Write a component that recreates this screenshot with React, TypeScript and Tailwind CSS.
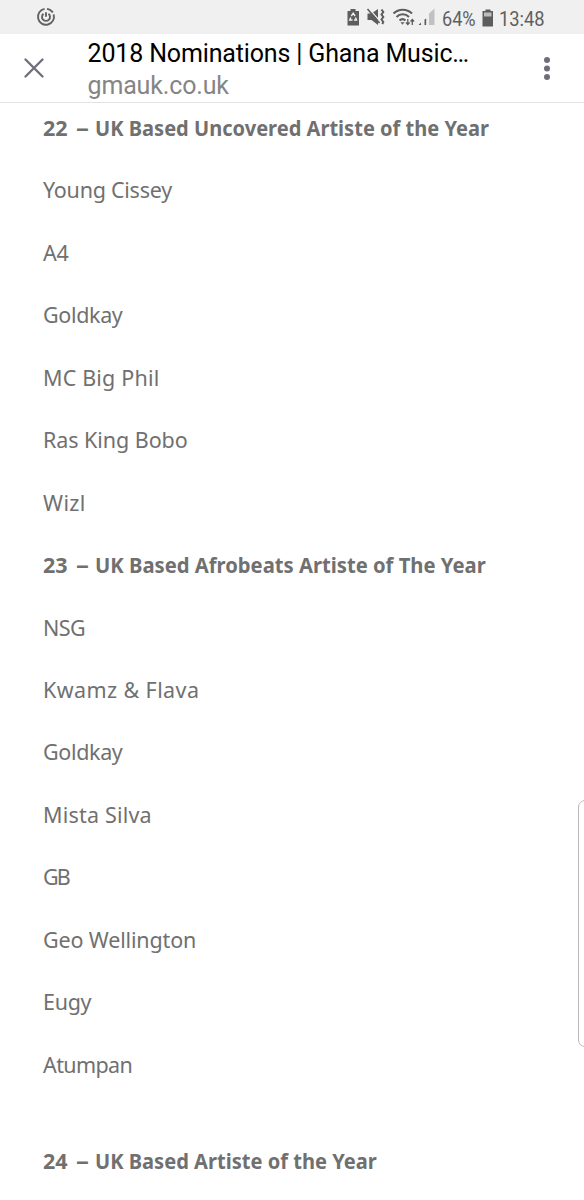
import React from 'react';

type Row =
  | { kind: 'category'; number: string; text: string; fit: string }
  | { kind: 'nominee'; text: string; spacing: string };

const rows: Row[] = [
  { kind: 'category', number: '22', text: 'UK Based Uncovered Artiste of the Year', fit: 'scale-x-[0.933]' },
  { kind: 'nominee', text: 'Young Cissey', spacing: 'tracking-[-0.25px]' },
  { kind: 'nominee', text: 'A4', spacing: 'tracking-[-0.2px]' },
  { kind: 'nominee', text: 'Goldkay', spacing: 'tracking-[-0.35px]' },
  { kind: 'nominee', text: 'MC Big Phil', spacing: 'tracking-[0.18px]' },
  { kind: 'nominee', text: 'Ras King Bobo', spacing: 'tracking-[-0.06px]' },
  { kind: 'nominee', text: 'Wizl', spacing: 'tracking-[0.4px]' },
  { kind: 'category', number: '23', text: 'UK Based Afrobeats Artiste of The Year', fit: 'scale-x-[0.94]' },
  { kind: 'nominee', text: 'NSG', spacing: 'tracking-[-0.6px]' },
  { kind: 'nominee', text: 'Kwamz & Flava', spacing: 'tracking-[0.4px]' },
  { kind: 'nominee', text: 'Goldkay', spacing: 'tracking-[-0.35px]' },
  { kind: 'nominee', text: 'Mista Silva', spacing: 'tracking-[0.2px]' },
  { kind: 'nominee', text: 'GB', spacing: 'tracking-[-2px]' },
  { kind: 'nominee', text: 'Geo Wellington', spacing: 'tracking-[-0.15px]' },
  { kind: 'nominee', text: 'Eugy', spacing: 'tracking-[-0.3px]' },
  { kind: 'nominee', text: 'Atumpan', spacing: 'tracking-[-0.6px]' },
];

function PowerRing() {
  return (
    <svg width="20" height="20" viewBox="0 0 20 20" fill="none" stroke="#626262" strokeWidth="1.900">
      <path d="M8.600 1.900A8 8 0 1 0 17.600 7.400" />
      <path d="M11 1.900A8 8 0 0 1 16.800 5.600" />
      <path d="M7.500 6.800a4 4 0 1 0 5 0" />
      <path d="M10 5.300v4.500" />
    </svg>
  );
}

function StatusIcons() {
  return (
    <svg width="90" height="22" viewBox="346 6 90 22" fill="none">
      <path d="M350.500 9h5v2h3.500v14.500h-11.500v-14.500h3z" fill="#5d5d5d" />
      <path d="M351.300 16l1.900-2.800 1.900 2.800M355.500 17.500l1 2.500h-2.500M352.500 20h-2.800l1.100-2.500" stroke="#f1f1f1" strokeWidth="1.400" />
      <path d="M367.500 13.500h4l6.500-4.500v16l-6.500-5h-4z" fill="#5d5d5d" />
      <path d="M368.500 8l13 15" stroke="#f0f0f0" strokeWidth="1.200" />
      <path d="M367.500 9l12 14" stroke="#5d5d5d" strokeWidth="1.600" />
      <path d="M381.500 9.500l1.800 2.500-1.800 2.500 1.800 2.500-1.800 2.500 1.800 2.500-1 2" stroke="#5d5d5d" strokeWidth="2" />
      <path d="M393.500 13.500a13 13 0 0 1 18.500 0M396.500 17a8.500 8.500 0 0 1 12.500 0M399.500 20.500a4.500 4.500 0 0 1 6 0" stroke="#5d5d5d" strokeWidth="2" />
      <path d="M400.500 22.300h4l-2 2.500z" fill="#5d5d5d" />
      <path d="M407.800 19v5M406 22.500l1.800 2 1.800-2M412.300 25v-5M410.500 21.500l1.800-2 1.800 2" stroke="#5d5d5d" strokeWidth="1.300" />
      <path d="M418.500 25l2.500-2.500V25zM424.500 19.500l1.700-1V25h-1.700z" fill="#5d5d5d" />
      <path d="M429 13.500l5.500-5V25H429z" fill="#c1c1c1" />
    </svg>
  );
}

function Battery() {
  return (
    <svg width="12" height="18" viewBox="0 0 12 18">
      <path d="M3.500 0.500h5v1.500H11v15.500H0.500V2h3z" fill="#5d5d5d" />
      <path d="M2 3.500h7.500v4H2z" fill="#bdbdbd" />
    </svg>
  );
}

function StatusBar() {
  return (
    <div className="flex h-[34px] shrink-0 items-center bg-[#f0f0f0] pl-[36px] font-[Roboto,sans-serif] text-[20.6px] leading-[34px] text-[#606060]">
      <PowerRing />
      <div className="ml-[290px] flex items-center">
        <StatusIcons />
        <span className="ml-[6px] block w-[34px] origin-left scale-x-[0.88] whitespace-nowrap pt-[3px]">64%</span>
        <span className="ml-[6px] pt-[1px]"><Battery /></span>
        <span className="ml-[5px] block w-[46px] origin-left scale-x-[0.89] whitespace-nowrap pt-[3px]">13:48</span>
      </div>
    </div>
  );
}

function TitleBar() {
  return (
    <header className="flex h-[69px] shrink-0 border-b border-[#e2e2e4] bg-white font-[Roboto,sans-serif] text-[25px]">
      <svg className="mt-[24px] ml-[24px] shrink-0" width="20" height="20" viewBox="0 0 20 20" stroke="#6e6e7c" strokeWidth="2.300" strokeLinecap="round">
        <path d="M1.500 1.500l17 17M18.500 1.500l-17 17" />
      </svg>
      <div className="ml-[43.5px] flex flex-1 flex-col whitespace-nowrap pt-[4px]">
        <h1 className="h-[33px] leading-[32px] tracking-[-0.15px] text-black">2018 Nominations | Ghana Music…</h1>
        <p className="leading-[32px] tracking-[-0.15px] text-[#858585]">gmauk.co.uk</p>
      </div>
      <svg className="mt-[22px] mr-[33px] shrink-0" width="8" height="26" viewBox="0 0 8 26" fill="#6e6e7a">
        <circle cx="4" cy="4" r="3" />
        <circle cx="4" cy="12.500" r="3" />
        <circle cx="4" cy="21" r="3" />
      </svg>
    </header>
  );
}

function Category({ number, text, fit }: { number: string; text: string; fit: string }) {
  return (
    <h2 className="flex font-bold">
      <span className="w-[33px]">{number}</span>
      <span className="w-[18.5px]"><span className="inline-block origin-left scale-x-[1.2]">–</span></span>
      <span className={`origin-left ${fit}`}>{text}</span>
    </h2>
  );
}

export default function App() {
  return (
    <div className="relative flex h-[1200px] w-[584px] flex-col overflow-hidden bg-white">
      <StatusBar />
      <TitleBar />
      <main className="flex flex-col whitespace-nowrap pt-[10px] pl-[43px] font-['Noto_Sans',sans-serif] text-[21.5px] leading-[30px] text-[#707070]">
        <div className="flex flex-col gap-[32.45px]">
          {rows.map((row, i) =>
            row.kind === 'category' ? (
              <Category key={i} number={row.number} text={row.text} fit={row.fit} />
            ) : (
              <p key={i} className={row.spacing}>{row.text}</p>
            ),
          )}
        </div>
        <div className="mt-[66px]">
          <Category number="24" text="UK Based Artiste of the Year" fit="scale-x-[0.934]" />
        </div>
      </main>
      <div className="absolute top-[800px] left-[578px] h-[247px] w-[20px] rounded-[7px] border border-[#b9b9b9] bg-white" />
    </div>
  );
}
